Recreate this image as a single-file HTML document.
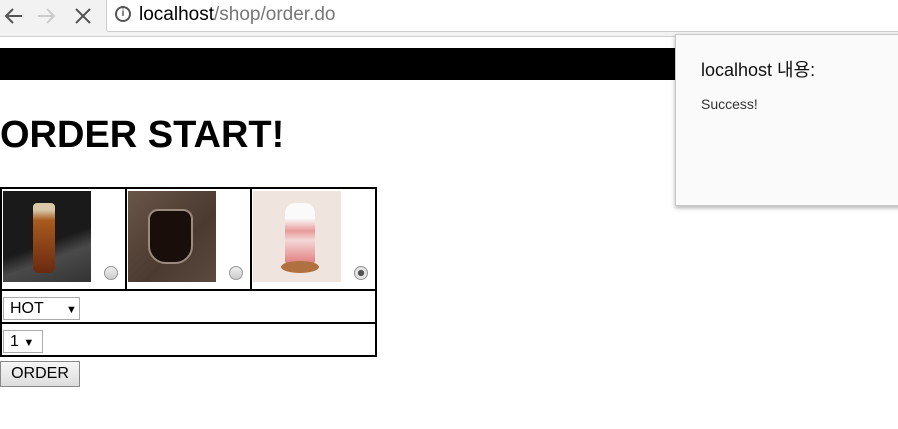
<!DOCTYPE html>
<html><head><meta charset="utf-8"><style>
*{box-sizing:border-box}
body{margin:0;width:898px;height:429px;overflow:hidden;background:#fff;font-family:"Liberation Sans","Noto Sans CJK KR",sans-serif;position:relative}
.abs{position:absolute}
.bar{left:0;top:0;width:898px;height:37px;background:#f2f2f2;border-bottom:1px solid #cfcfcf}
.url{left:106px;top:0;width:800px;height:32px;background:#fff;border-left:1px solid #ccc;border-bottom:1px solid #ccc;border-bottom-left-radius:3px}
.img{width:88px;height:91px}
.radio{width:14px;height:14px;border-radius:50%;border:1px solid #999;background:linear-gradient(#eee,#ccc)}
.sel{border:1px solid #aaa;background:#fff;height:23px;font-size:16px;line-height:21px;padding-left:6px}
</style></head><body>
<div class="abs bar"></div>
<div class="abs url"></div>
<svg class="abs" style="left:0;top:0" width="100" height="32" viewBox="0 0 100 32"><g fill="none" stroke-width="2"><path d="M22 16H6M13 9l-7 7 7 7" stroke="#555"/><path d="M38 16h16M47 9l7 7-7 7" stroke="#ccc"/><path d="M76 9l14 14M90 9L76 23" stroke="#555"/></g></svg>
<div class="abs" style="left:115px;top:6px;width:16px;height:16px;border:2px solid #555;border-radius:50%;font-size:10px;font-weight:bold;text-align:center;line-height:12px;color:#555">i</div>
<div class="abs" style="left:139px;top:4px;font-size:19px;color:#000">localhost<span style="color:#777">/shop/order.do</span></div>
<div class="abs" style="left:0;top:48px;width:680px;height:32px;background:#000"></div>
<div class="abs" style="left:0;top:114px;font-size:38px;font-weight:bold;font-family:'Liberation Sans',sans-serif">ORDER START!</div>
<div class="abs" style="left:0;top:187px;width:377px;height:170px;border:2px solid #000"></div>
<div class="abs" style="left:125px;top:188px;width:2px;height:102px;background:#000"></div>
<div class="abs" style="left:250px;top:188px;width:2px;height:102px;background:#000"></div>
<div class="abs" style="left:0;top:289px;width:377px;height:2px;background:#000"></div>
<div class="abs" style="left:0;top:322px;width:377px;height:2px;background:#000"></div>
<div class="abs img" style="left:3px;top:191px;background:linear-gradient(160deg,#1a1a1a 55%,#4a4a4a 70%,#333)"><div class="abs" style="left:30px;top:12px;width:22px;height:70px;border-radius:4px 4px 6px 6px;background:linear-gradient(#d8c8a8 10%,#a85a1e 25%,#6a2a10)"></div></div>
<div class="abs img" style="left:128px;top:191px;background:linear-gradient(135deg,#6a5548,#4a3a30 60%,#5a4a40)"><div class="abs" style="left:20px;top:18px;width:45px;height:55px;border-radius:10px 10px 18px 18px;background:#1a0e0a;border:2px solid #9a8a80"></div></div>
<div class="abs img" style="left:253px;top:191px;background:#efe4de"><div class="abs" style="left:32px;top:12px;width:30px;height:62px;border-radius:10px 10px 4px 4px;background:linear-gradient(#fafafa 25%,#e89a9a 45%,#f4d8d8 60%,#e07878)"></div><div class="abs" style="left:28px;top:70px;width:38px;height:12px;border-radius:50%;background:#b07040"></div></div>
<div class="abs radio" style="left:104px;top:266px"></div>
<div class="abs radio" style="left:229px;top:266px"></div>
<div class="abs radio" style="left:354px;top:266px;background:radial-gradient(#555 35%,#eee 40%,#ccc)"></div>
<div class="abs sel" style="left:3px;top:297px;width:77px">HOT <span style="font-size:11px;margin-left:18px">&#9660;</span></div>
<div class="abs sel" style="left:3px;top:330px;width:40px">1 <span style="font-size:11px">&#9660;</span></div>
<div class="abs" style="left:0;top:361px;width:80px;height:26px;border:1px solid #888;background:linear-gradient(#f6f6f6,#ddd);font-size:16px;text-align:center;line-height:24px">ORDER</div>
<div class="abs" style="left:675px;top:34px;width:230px;height:172px;background:#fafafa;border:1px solid #c8c8c8;box-shadow:0 2px 4px rgba(0,0,0,.3)">
<div class="abs" style="left:25px;top:21px;font-size:18px;color:#111">localhost 내용:</div>
<div class="abs" style="left:25px;top:61px;font-size:14px;color:#333">Success!</div>
</div>
</body></html>
